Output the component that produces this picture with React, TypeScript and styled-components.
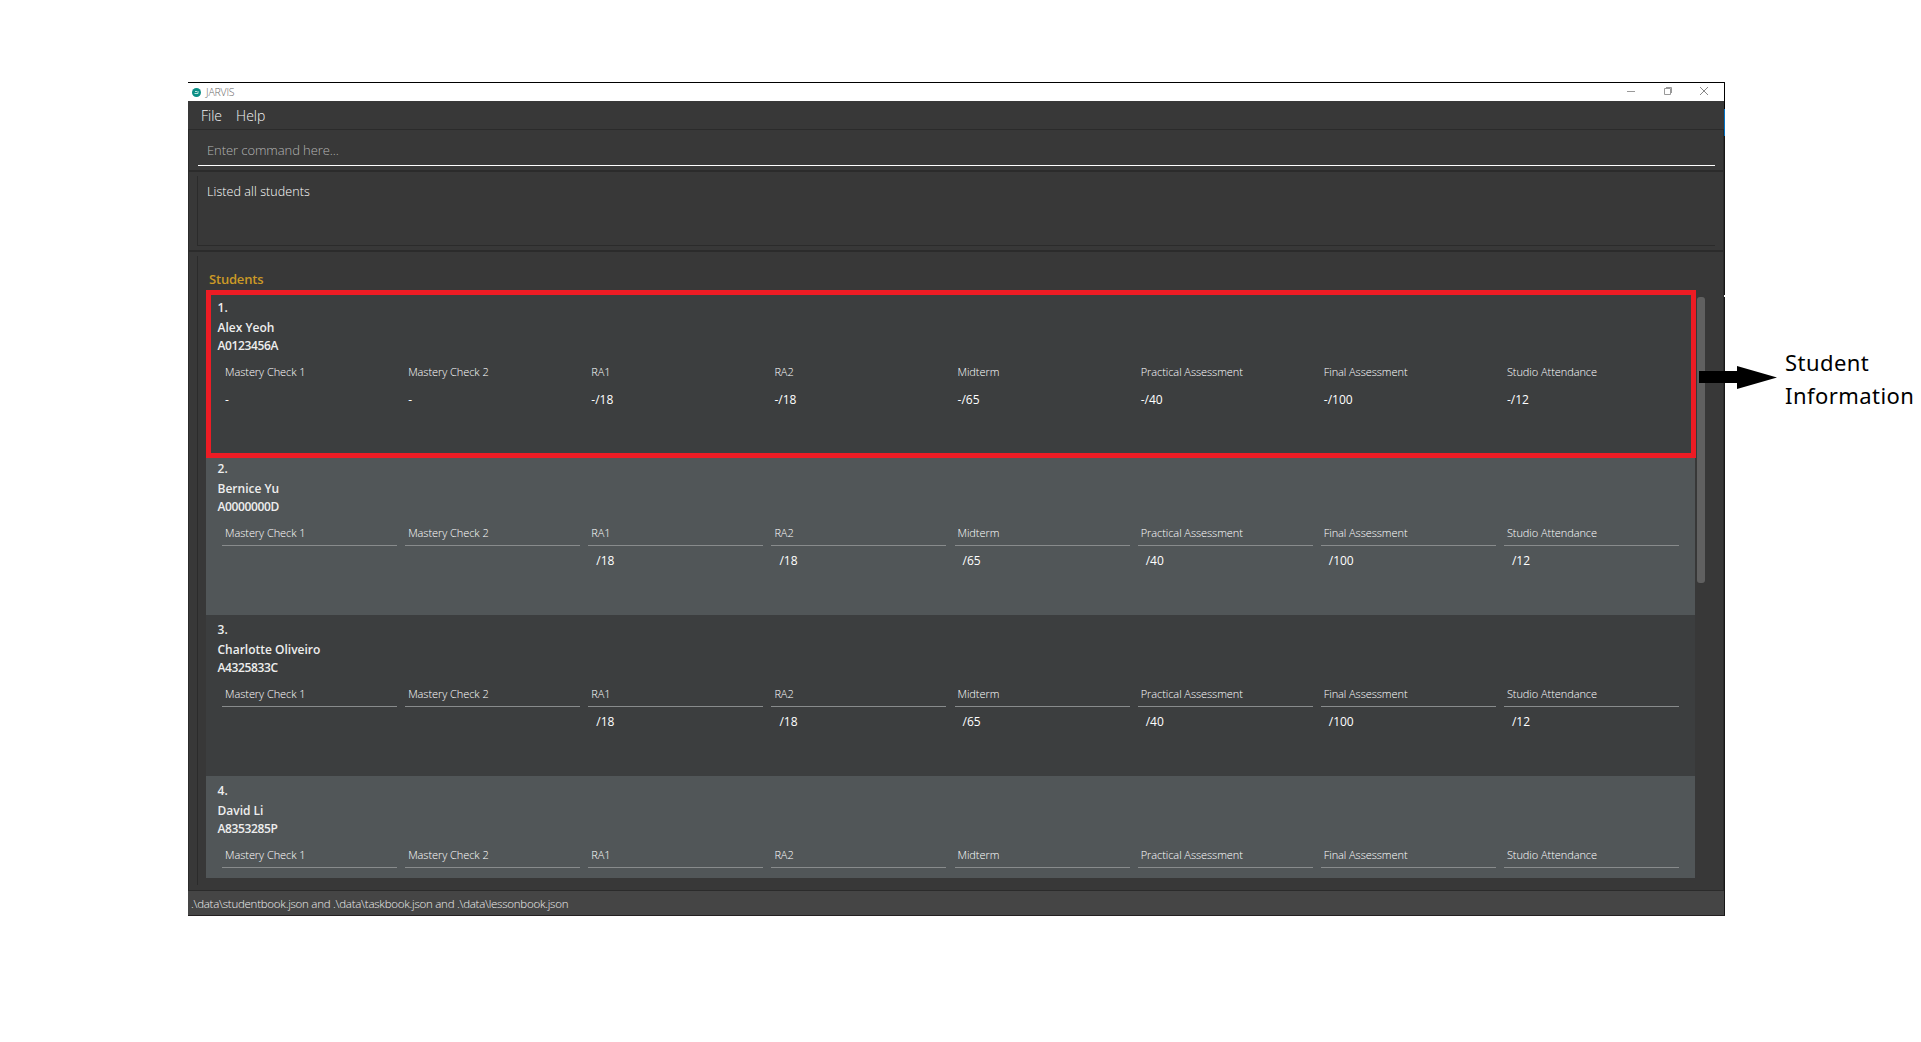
import React from "react";
import styled, { createGlobalStyle } from "styled-components";

const Global = createGlobalStyle`
  * { box-sizing: border-box; }
  body { margin: 0; background: #fff; font-family: "Open Sans", "Noto Sans", sans-serif; }
`;

const Page = styled.main`
  display: flex;
  align-items: flex-start;
  width: 1921px;
  height: 1042px;
  padding: 82px 0 0 188px;
  overflow: hidden;
`;

const Window = styled.section`
  position: relative;
  display: flex;
  flex-direction: column;
  flex: none;
  width: 1537px;
  height: 834px;
  background: #383838;
  border-top: 1px solid #000;
  border-right: 1px solid #171717;
  border-bottom: 1px solid #231f20;

  &::after {
    content: "";
    position: absolute;
    top: 0;
    right: -1px;
    width: 1px;
    height: 214px;
    background: linear-gradient(
      #000 0 26px, #0072c6 26px 53px, #171717 53px 212px, #fff 212px 214px
    );
  }
`;

const TitleBar = styled.header`
  display: flex;
  align-items: center;
  flex: none;
  height: 18px;
  padding: 0 16px 0 4px;
  background: #fff;
`;

const Title = styled.span`
  margin-left: 5px;
  flex: 1;
  font-size: 10.5px;
  font-weight: 300;
  line-height: 17px;
  letter-spacing: -0.2px;
  color: #666;
`;

const Controls = styled.div`
  display: flex;
  align-items: center;
  gap: 28.5px;
  height: 16px;
  margin-bottom: 2px;
  svg { display: block; }
`;

const MenuBar = styled.nav`
  display: flex;
  flex: none;
  gap: 14px;
  height: 29px;
  padding-left: 13px;
  border-bottom: 1px solid #2b2b2b;
`;

const MenuItem = styled.span`
  font-size: 14px;
  font-weight: 300;
  line-height: 29px;
  color: #f4f4f4;
`;

const Body = styled.div`
  display: flex;
  flex-direction: column;
  flex: 1;
  min-height: 0;
  border-left: 1px solid #2b2b2b;
  border-right: 1px solid #2b2b2b;
`;

const CommandPane = styled.div`
  flex: none;
  height: 42px;
  padding: 0 8px 0 9px;
  border-bottom: 2px solid #2b2b2b;
`;

const CommandField = styled.div`
  height: 36px;
  padding: 7px 0 0 9px;
  border-bottom: 1px solid #fff;
  font-size: 13px;
  font-weight: 300;
  line-height: 26px;
  letter-spacing: -0.08px;
  color: #b4b4b4;
`;

const ResultPane = styled.div`
  flex: none;
  height: 80px;
  padding: 4px 8px 4px 8px;
  border-bottom: 2px solid #2b2b2b;
`;

const ResultBox = styled.div`
  height: 70px;
  padding: 3px 0 0 9px;
  border-left: 1px solid #2b2b2b;
  border-bottom: 1px solid #2b2b2b;
  font-size: 12.5px;
  line-height: 26px;
  font-weight: 300;
  letter-spacing: 0.08px;
  color: #fff;
`;

const ListPane = styled.div`
  flex: 1;
  min-height: 0;
  padding: 4px 0 5px 8px;
  border-bottom: 1px solid #2b2b2b;
`;

const ListFrame = styled.div`
  display: flex;
  flex-direction: column;
  height: 629px;
  padding: 11px 0 7px 8px;
  border-left: 1px solid #2b2b2b;
`;

const Heading = styled.h1`
  flex: none;
  margin: 0;
  height: 26px;
  padding-left: 3px;
  font-size: 13px;
  font-weight: 600;
  line-height: 24px;
  letter-spacing: -0.2px;
  color: #cc9a26;
`;

const ListRow = styled.div`
  display: flex;
  flex: 1;
  min-height: 0;
  gap: 2px;
`;

const List = styled.div`
  position: relative;
  width: 1489px;
  height: 585px;
`;

const Clip = styled.div`
  height: 100%;
  overflow: hidden;
`;

const Highlight = styled.div`
  position: absolute;
  top: -3px;
  left: 0;
  width: 1490px;
  height: 168px;
  border: 5px solid #ed1c24;
`;

const Thumb = styled.div`
  width: 8px;
  height: 286px;
  margin-top: 4px;
  border-radius: 3px;
  background: #606060;
`;

const Card = styled.article<{ $alt: boolean }>`
  height: 161px;
  padding: 5px 0 0 11.5px;
  background: ${(p) => (p.$alt ? "#515658" : "#3c3e3f")};
`;

const Identity = styled.div<{ $h: number; $spacing: number }>`
  height: ${(p) => p.$h}px;
  font-size: 12px;
  line-height: 20px;
  font-weight: 600;
  letter-spacing: ${(p) => p.$spacing}px;
  color: #eee;
`;

const Scores = styled.div`
  display: grid;
  grid-template-columns: repeat(8, 175px);
  column-gap: 8.14px;
  padding: 7px 0 0 4.5px;
`;

const Label = styled.div<{ $line: boolean }>`
  height: 24px;
  padding-left: 3px;
  border-bottom: 1px solid ${(p) => (p.$line ? "#888b8c" : "transparent")};
  font-size: 11px;
  font-weight: 300;
  line-height: 22px;
  letter-spacing: -0.06px;
  white-space: nowrap;
  color: #fff;
`;

const Value = styled.div<{ $indent: boolean }>`
  height: 28px;
  padding-left: ${(p) => (p.$indent ? 8 : 3)}px;
  font-size: 12px;
  line-height: 30px;
  color: #fff;
`;

const Footer = styled.footer`
  flex: none;
  height: 24px;
  padding-left: 3px;
  background: #454545;
  font-size: 11.5px;
  font-weight: 300;
  line-height: 25px;
  letter-spacing: -0.25px;
  color: #ededed;
`;

const Callout = styled.aside`
  position: relative;
  display: flex;
  align-items: flex-start;
  flex: none;
  gap: 8px;
  margin: 264px 0 0 -26px;
  svg { display: block; margin-top: 20px; }
`;

const CalloutText = styled.p`
  margin: 0;
  width: 138px;
  font-family: "Noto Sans", sans-serif;
  font-size: 22px;
  line-height: 33px;
  letter-spacing: 0.45px;
  color: #000;
`;

const fields = [
  { label: "Mastery Check 1", max: "" },
  { label: "Mastery Check 2", max: "" },
  { label: "RA1", max: "/18" },
  { label: "RA2", max: "/18" },
  { label: "Midterm", max: "/65" },
  { label: "Practical Assessment", max: "/40" },
  { label: "Final Assessment", max: "/100" },
  { label: "Studio Attendance", max: "/12" },
];

const students = [
  { name: "Alex Yeoh", id: "A0123456A", scored: true },
  { name: "Bernice Yu", id: "A0000000D", scored: true },
  { name: "Charlotte Oliveiro", id: "A4325833C", scored: true },
  { name: "David Li", id: "A8353285P", scored: false },
];

export default function App() {
  return (
    <Page>
      <Global />
      <Window>
        <TitleBar>
          <svg width="9" height="9" viewBox="0 0 9 9">
            <circle cx="4.5" cy="4.5" r="4.5" fill="#0b8f86" />
            <path d="M2.5 5.5h3.5V3M3 3.5h2" stroke="#b9e3df" fill="none" />
          </svg>
          <Title>JARVIS</Title>
          <Controls>
            <svg width="8" height="8" viewBox="0 0 8 8" stroke="#999"><path d="M0 4.5h8" /></svg>
            <svg width="8" height="8" viewBox="0 0 8 8" fill="none" stroke="#999"><path d="M.5 1.5h6v6h-6zM2 .5h5.5V6" /></svg>
            <svg width="8" height="8" viewBox="0 0 8 8" stroke="#888"><path d="M0 0l8 8M8 0L0 8" /></svg>
          </Controls>
        </TitleBar>
        <MenuBar>
          <MenuItem>File</MenuItem>
          <MenuItem>Help</MenuItem>
        </MenuBar>
        <Body>
          <CommandPane>
            <CommandField>Enter command here...</CommandField>
          </CommandPane>
          <ResultPane>
            <ResultBox>Listed all students</ResultBox>
          </ResultPane>
          <ListPane>
            <ListFrame>
              <Heading>Students</Heading>
              <ListRow>
                <List>
                  <Clip>
                    {students.map((s, i) => (
                      <Card key={s.id} $alt={i % 2 === 1}>
                        <Identity $h={20} $spacing={0}>{i + 1}.</Identity>
                        <Identity $h={18} $spacing={0}>{s.name}</Identity>
                        <Identity $h={18} $spacing={-0.38}>{s.id}</Identity>
                        <Scores>
                          {fields.map((f) => (
                            <div key={f.label}>
                              <Label $line={i > 0}>{f.label}</Label>
                              {s.scored && (
                                <Value $indent={i > 0}>{i === 0 ? "-" : ""}{f.max}</Value>
                              )}
                            </div>
                          ))}
                        </Scores>
                      </Card>
                    ))}
                  </Clip>
                  <Highlight />
                </List>
                <Thumb />
              </ListRow>
            </ListFrame>
          </ListPane>
        </Body>
        <Footer>.\data\studentbook.json and .\data\taskbook.json and .\data\lessonbook.json</Footer>
      </Window>
      <Callout>
        <svg width="78" height="24" viewBox="0 0 78 24"><path d="M0 5h38V0l40 11.5L38 23v-6H0z" /></svg>
        <CalloutText>Student Information</CalloutText>
      </Callout>
    </Page>
  );
}
